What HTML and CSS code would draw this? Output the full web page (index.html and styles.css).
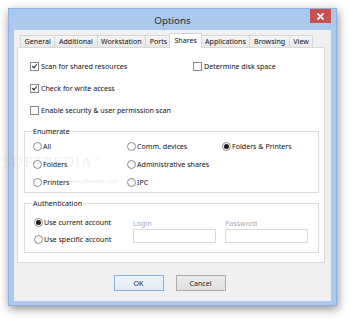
FILE: index.html
```html
<!DOCTYPE html>
<html lang="en">
<head>
    <meta charset="UTF-8">
    <title>Options</title>
    <link rel="stylesheet" href="styles.css">
</head>
<body>

<div class="window">
    <div class="titlebar">
        <span class="title">Options</span>
        <span class="close">
            <svg width="7" height="7" viewBox="0 0 7 7"><path d="M0.5 0.5L6.5 6.5M6.5 0.5L0.5 6.5" stroke="#fff" stroke-width="1.6"/></svg>
        </span>
    </div>
    <div class="client">
        <div class="tabs">
            <div class="tab">General</div>
            <div class="tab">Additional</div>
            <div class="tab">Workstation</div>
            <div class="tab">Ports</div>
            <div class="tab active">Shares</div>
            <div class="tab">Applications</div>
            <div class="tab">Browsing</div>
            <div class="tab">View</div>
        </div>
        <div class="panel">
            <div class="checks">
                <div class="check on"><span class="box"></span>Scan for shared resources</div>
                <div class="check"><span class="box"></span>Determine disk space</div>
                <div class="check on"><span class="box"></span>Check for write access</div>
                <div></div>
                <div class="check"><span class="box"></span>Enable security &amp; user permission scan</div>
            </div>

            <div class="group enum">
                <span class="group-title">Enumerate</span>
                <div class="radio"><span class="dot"></span>All</div>
                <div class="radio"><span class="dot"></span>Comm. devices</div>
                <div class="radio on"><span class="dot"></span>Folders &amp; Printers</div>
                <div class="radio"><span class="dot"></span>Folders</div>
                <div class="radio"><span class="dot"></span>Administrative shares</div>
                <div></div>
                <div class="radio"><span class="dot"></span>Printers</div>
                <div class="radio"><span class="dot"></span>IPC</div>
            </div>

            <div class="group auth">
                <span class="group-title">Authentication</span>
                <div class="auth-radios">
                    <div class="radio on"><span class="dot"></span>Use current account</div>
                    <div class="radio"><span class="dot"></span>Use specific account</div>
                </div>
                <div class="field">
                    <span class="field-label">Login</span>
                    <span class="input"></span>
                </div>
                <div class="field">
                    <span class="field-label">Password</span>
                    <span class="input"></span>
                </div>
            </div>
        </div>
        <div class="buttons">
            <div class="btn default">OK</div>
            <div class="btn">Cancel</div>
        </div>
    </div>
</div>

<div class="watermark">SOFTPEDIA<sup>™</sup></div>
<div class="watermark-url">www.softpedia.com</div>

</body>
</html>
```

FILE: styles.css
```css
html,body{
    height: 100%;
}
body{
    margin: 0;
    background: #fff;
    font-family: "Noto Sans", "Open Sans", sans-serif;
    font-size: 7.1px;
    color: #111;
    overflow: hidden;
}

.window{
    margin: 8px 0 0 8px;
    width: 329px;
    height: 298px;
    box-sizing: border-box;
    background: #abc9ee;
    border: 1px solid #8eb2de;
    padding: 0 5px 4px;
    display: flex;
    flex-direction: column;
    box-shadow: 1px 3px 9px rgba(0,0,0,0.45);
}

.titlebar{
    height: 21px;
    position: relative;
    display: flex;
    align-items: center;
    justify-content: center;
}
.title{
    font-size: 9.8px;
    color: #2b2b2b;
    padding-top: 1px;
}
.close{
    position: absolute;
    top: 0;
    right: 0;
    width: 21px;
    height: 14px;
    background: #c75050;
    display: flex;
    align-items: center;
    justify-content: center;
}

.client{
    flex: 1;
    background: #f0f0f0;
    padding: 3px 6px 0 3px;
    display: flex;
    flex-direction: column;
}

.tabs{
    height: 14px;
    display: flex;
    align-items: flex-end;
    padding-left: 3px;
}
.tab{
    height: 12px;
    box-sizing: border-box;
    padding: 0 3.6px;
    margin-right: -1px;
    border: 1px solid #d5d5d5;
    border-bottom: none;
    background: linear-gradient(#f4f4f4, #e8e8e8);
    line-height: 11px;
    white-space: nowrap;
}
.tab.active{
    height: 15px;
    margin: 0 -1px -1px -2px;
    padding: 0 4.6px;
    background: #fff;
    position: relative;
    z-index: 1;
    line-height: 12px;
}
.tab.active + .tab{
    margin-left: -1px;
}

.panel{
    height: 216px;
    box-sizing: border-box;
    background: #fff;
    border: 1px solid #d9d9d9;
    padding: 12px 5px 0 6px;
}

.checks{
    display: grid;
    grid-template-columns: 163px 1fr;
    grid-auto-rows: 12px;
    row-gap: 10px;
    padding-left: 6px;
}
.check, .radio{
    display: flex;
    align-items: center;
    white-space: nowrap;
}
.box{
    width: 9px;
    height: 9px;
    box-sizing: border-box;
    border: 1px solid #8a8a8a;
    background: #fff;
    margin-right: 2px;
    position: relative;
}
.check.on .box::after{
    content: "";
    position: absolute;
    left: 2px;
    top: 0;
    width: 2px;
    height: 4px;
    border: solid #222;
    border-width: 0 1.5px 1.5px 0;
    transform: rotate(40deg);
}

.group{
    position: relative;
    border: 1px solid #dcdcdc;
}
.group-title{
    position: absolute;
    top: -6px;
    left: 7px;
    padding: 0 1px;
    background: #fff;
    line-height: 11px;
}

.enum{
    margin-top: 15px;
    padding: 8px 0 4px 8px;
    display: grid;
    grid-template-columns: 94px 95px 1fr;
    grid-auto-rows: 12px;
    row-gap: 6px;
}
.dot{
    width: 9px;
    height: 9px;
    box-sizing: border-box;
    border: 1px solid #8a8a8a;
    border-radius: 50%;
    background: #fff;
    margin-right: 1px;
    display: flex;
    align-items: center;
    justify-content: center;
}
.radio.on .dot::after{
    content: "";
    width: 5px;
    height: 5px;
    border-radius: 50%;
    background: #1a1a1a;
}

.auth{
    margin-top: 10px;
    height: 50px;
    box-sizing: border-box;
    padding: 12px 0 0 9px;
    display: flex;
}
.auth-radios{
    width: 99px;
    display: flex;
    flex-direction: column;
    gap: 5px;
}
.auth-radios .radio{
    height: 12px;
}
.field{
    width: 83px;
    margin-right: 9px;
    padding-top: 2px;
    display: flex;
    flex-direction: column;
}
.field-label{
    color: #a8a8a8;
    line-height: 10px;
}
.input{
    height: 14px;
    margin-top: 1px;
    box-sizing: border-box;
    border: 1px solid #dadada;
    background: #fff;
}

.buttons{
    margin-top: 12px;
    display: flex;
    justify-content: center;
    gap: 12px;
    padding-right: 3px;
}
.btn{
    width: 50px;
    height: 16px;
    box-sizing: border-box;
    border: 1px solid #adadad;
    background: linear-gradient(#ececec, #e0e0e0);
    text-align: center;
    line-height: 14px;
    color: #222;
}
.btn.default{
    border-color: #7eb4ea;
    background: linear-gradient(#eef4fa, #e3ebf3);
}

.watermark{
    position: absolute;
    left: 3px;
    top: 154px;
    font-size: 15px;
    letter-spacing: 1px;
    color: rgba(150,150,150,0.18);
    font-family: "Liberation Serif", serif;
}
.watermark sup{
    font-size: 6px;
}
.watermark-url{
    position: absolute;
    left: 62px;
    top: 177px;
    font-size: 6px;
    color: rgba(150,150,150,0.25);
}
```
